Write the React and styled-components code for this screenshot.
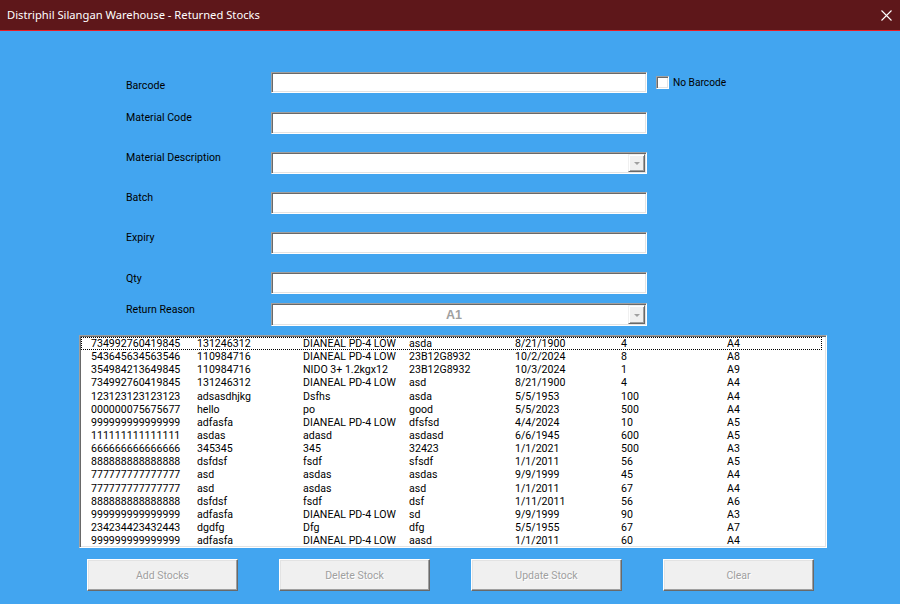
import React from "react";
import styled, { createGlobalStyle } from "styled-components";

const GlobalStyle = createGlobalStyle`
  html, body {
    margin: 0;
    padding: 0;
    background: #42a5f0;
  }
  * {
    box-sizing: border-box;
  }
`;

const Window = styled.div`
  width: 900px;
  height: 604px;
  display: flex;
  flex-direction: column;
  background: #42a5f0;
  font-family: Roboto, "Liberation Sans", sans-serif;
  overflow: hidden;
`;

const TitleBar = styled.div`
  height: 31px;
  flex-shrink: 0;
  display: flex;
  align-items: center;
  justify-content: space-between;
  padding: 0 4px 0 7px;
  background: #5e171a;
  border-bottom: 1px solid #ec1c24;
`;

const Title = styled.span`
  color: #ffffff;
  font-family: "Noto Sans", "Open Sans", sans-serif;
  font-size: 11.2px;
  line-height: 30px;
`;

const CloseButton = styled.div`
  width: 20px;
  height: 30px;
  display: flex;
  align-items: center;
  justify-content: center;
`;

const Body = styled.div`
  flex: 1;
  display: flex;
  flex-direction: column;
  padding-top: 41px;
`;

const Form = styled.div`
  display: flex;
  flex-direction: column;
  padding-left: 126px;
`;

const FieldRow = styled.div`
  display: flex;
  align-items: flex-start;
  height: ${(p) => p.$height || 40}px;
`;

const Label = styled.div`
  width: 145px;
  flex-shrink: 0;
  margin-top: ${(p) => p.$offset || 0}px;
  font-size: 10.6px;
  line-height: 12px;
  color: #000;
`;

const TextBox = styled.div`
  position: relative;
  width: 376px;
  height: ${(p) => p.$height || 22}px;
  background: #ffffff;
  border: 1px solid;
  border-color: #a0a0a0 #ffffff #ffffff #a0a0a0;
  box-shadow: inset 1px 1px 0 #696969, inset -1px -1px 0 #e3e3e3;
  display: flex;
  align-items: center;
  justify-content: center;
`;

const ComboValue = styled.span`
  font-family: "Liberation Sans", Arial, sans-serif;
  font-weight: bold;
  font-size: 12.5px;
  color: #a0a0a0;
  margin-right: 10px;
`;

const DropButton = styled.div`
  position: absolute;
  top: 1px;
  right: 1px;
  bottom: 1px;
  width: 17px;
  background: #f0f0f0;
  border-top: 1px solid #f0f0f0;
  border-left: 1px solid #f0f0f0;
  border-right: 1px solid #696969;
  border-bottom: 1px solid #696969;
  box-shadow: inset 1px 1px 0 #ffffff, inset -1px -1px 0 #a0a0a0;
  display: flex;
  align-items: center;
  justify-content: center;
  &::after {
    content: "";
    border-left: 3px solid transparent;
    border-right: 3px solid transparent;
    border-top: 3px solid #a0a0a0;
    margin-top: 1px;
  }
`;

const CheckWrap = styled.label`
  display: flex;
  align-items: center;
  gap: 4px;
  margin: 4px 0 0 9px;
  font-size: 10.2px;
  color: #000;
`;

const CheckBox = styled.span`
  width: 13px;
  height: 13px;
  background: #ffffff;
  border: 1px solid;
  border-color: #a0a0a0 #ffffff #ffffff #a0a0a0;
  box-shadow: inset 1px 1px 0 #696969, inset -1px -1px 0 #e3e3e3;
`;

const ListBox = styled.div`
  margin: 9px 0 0 79px;
  width: 748px;
  height: 213px;
  background: #ffffff;
  border: 1px solid;
  border-color: #a0a0a0 #ffffff #ffffff #a0a0a0;
  box-shadow: inset 1px 1px 0 #696969, inset -1px -1px 0 #e3e3e3;
  padding: 1px 4px 1px 1px;
  overflow: hidden;
`;

const ListRow = styled.div`
  display: grid;
  grid-template-columns: repeat(7, 106px);
  height: 13.15px;
  padding-left: 9px;
  border: 1px dotted ${(p) => (p.$focused ? "#000" : "transparent")};
  font-size: 10.6px;
  line-height: 11px;
  color: #000;
  white-space: nowrap;
`;

const Cell = styled.span`
  overflow: visible;
`;

const ButtonBar = styled.div`
  display: flex;
  gap: 41px;
  margin: 11px 0 0 87px;
`;

const Button = styled.div`
  width: 151px;
  height: 32px;
  background: #f0f0f0;
  border: 1px solid;
  border-color: #ffffff #696969 #696969 #ffffff;
  box-shadow: inset -1px -1px 0 #a0a0a0, inset 1px 1px 0 #e3e3e3;
  display: flex;
  align-items: center;
  justify-content: center;
  font-size: 10.5px;
  color: #a0a0a0;
  text-shadow: 1px 1px 0 #ffffff;
`;

const rows = [
  ["734992760419845", "131246312", "DIANEAL PD-4 LOW", "asda", "8/21/1900", "4", "A4"],
  ["543645634563546", "110984716", "DIANEAL PD-4 LOW", "23B12G8932", "10/2/2024", "8", "A8"],
  ["354984213649845", "110984716", "NIDO 3+ 1.2kgx12", "23B12G8932", "10/3/2024", "1", "A9"],
  ["734992760419845", "131246312", "DIANEAL PD-4 LOW", "asd", "8/21/1900", "4", "A4"],
  ["123123123123123", "adsasdhjkg", "Dsfhs", "asda", "5/5/1953", "100", "A4"],
  ["000000075675677", "hello", "po", "good", "5/5/2023", "500", "A4"],
  ["999999999999999", "adfasfa", "DIANEAL PD-4 LOW", "dfsfsd", "4/4/2024", "10", "A5"],
  ["111111111111111", "asdas", "adasd", "asdasd", "6/6/1945", "600", "A5"],
  ["666666666666666", "345345", "345", "32423", "1/1/2021", "500", "A3"],
  ["888888888888888", "dsfdsf", "fsdf", "sfsdf", "1/1/2011", "56", "A5"],
  ["777777777777777", "asd", "asdas", "asdas", "9/9/1999", "45", "A4"],
  ["777777777777777", "asd", "asdas", "asd", "1/1/2011", "67", "A4"],
  ["888888888888888", "dsfdsf", "fsdf", "dsf", "1/11/2011", "56", "A6"],
  ["999999999999999", "adfasfa", "DIANEAL PD-4 LOW", "sd", "9/9/1999", "90", "A3"],
  ["234234423432443", "dgdfg", "Dfg", "dfg", "5/5/1955", "67", "A7"],
  ["999999999999999", "adfasfa", "DIANEAL PD-4 LOW", "aasd", "1/1/2011", "60", "A4"],
];

const fields = [
  { label: "Material Code" },
  { label: "Material Description", combo: true },
  { label: "Batch" },
  { label: "Expiry" },
  { label: "Qty", height: 31, offset: 1 },
];

const App = () => {
  return (
    <Window>
      <GlobalStyle />
      <TitleBar>
        <Title>Distriphil Silangan Warehouse - Returned Stocks</Title>
        <CloseButton>
          <svg width="11" height="11" viewBox="0 0 11 11">
            <path d="M0.5 0.5 L10.5 10.5 M10.5 0.5 L0.5 10.5" stroke="#ffffff" strokeWidth="1.1" />
          </svg>
        </CloseButton>
      </TitleBar>
      <Body>
        <Form>
          <FieldRow>
            <Label $offset={8}>Barcode</Label>
            <TextBox $height={21} />
            <CheckWrap>
              <CheckBox />
              No Barcode
            </CheckWrap>
          </FieldRow>
          {fields.map((f) => (
            <FieldRow key={f.label} $height={f.height}>
              <Label $offset={f.offset}>{f.label}</Label>
              <TextBox>{f.combo && <DropButton />}</TextBox>
            </FieldRow>
          ))}
          <FieldRow $height={23}>
            <Label $offset={1}>Return Reason</Label>
            <TextBox $height={23}>
              <ComboValue>A1</ComboValue>
              <DropButton />
            </TextBox>
          </FieldRow>
        </Form>
        <ListBox>
          {rows.map((r, i) => (
            <ListRow key={i} $focused={i === 0}>
              {r.map((c, j) => (
                <Cell key={j}>{c}</Cell>
              ))}
            </ListRow>
          ))}
        </ListBox>
        <ButtonBar>
          <Button>Add Stocks</Button>
          <Button>Delete Stock</Button>
          <Button>Update Stock</Button>
          <Button>Clear</Button>
        </ButtonBar>
      </Body>
    </Window>
  );
};

export default App;
